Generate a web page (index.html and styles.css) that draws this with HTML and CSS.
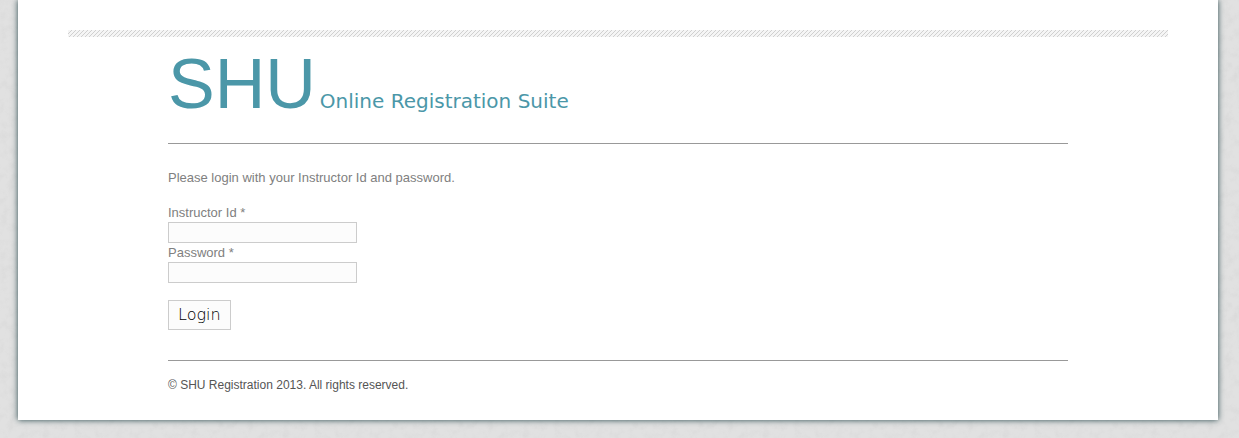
FILE: index.html
```
<!DOCTYPE html>
<html lang="en">
<head>
<meta charset="utf-8">
<title>SHU Online Registration Suite</title>
<link rel="stylesheet" href="styles.css">
</head>
<body>
<div class="page">
  <div class="stripe"></div>
  <div class="content">
    <header class="brand">
      <span class="brand-name">SHU</span>
      <span class="brand-tag">Online Registration Suite</span>
    </header>
    <main class="main">
      <p class="intro">Please login with your Instructor Id and password.</p>
      <form class="login">
        <label for="instructor">Instructor Id *</label>
        <input class="field" id="instructor" type="text">
        <label for="password">Password *</label>
        <input class="field" id="password" type="password">
        <button class="submit" type="submit">Login</button>
      </form>
    </main>
    <footer class="footer">© SHU Registration 2013. All rights reserved.</footer>
  </div>
</div>
</body>
</html>
```
FILE: styles.css
```
* { box-sizing: border-box; }
body {
  margin: 0;
  padding: 0 21px 18px 18px;
  background: #e1e1e1 url("data:image/svg+xml,%3Csvg xmlns='http://www.w3.org/2000/svg' width='240' height='240'%3E%3Cfilter id='n' x='0' y='0' width='1' height='1'%3E%3CfeTurbulence type='fractalNoise' baseFrequency='.12' numOctaves='4' stitchTiles='stitch'/%3E%3CfeColorMatrix values='0 0 0 0 .45 0 0 0 0 .45 0 0 0 0 .45 .3 0 0 0 -.13'/%3E%3C/filter%3E%3Crect width='240' height='240' filter='url(%23n)'/%3E%3C/svg%3E");
  font-family: "Liberation Sans", Arial, sans-serif;
  font-size: 13px;
  line-height: 16px;
  color: #808080;
}
.page {
  max-width: 1200px;
  margin: 0 auto;
  padding: 30px 50px 27px;
  background: #fff;
  box-shadow: 0 0 6px #28484c;
}
.stripe {
  height: 7px;
  background: #f5f5f5 url("data:image/svg+xml,%3Csvg xmlns='http://www.w3.org/2000/svg' width='4' height='4' shape-rendering='crispEdges'%3E%3Cpath fill='%23d0d0d0' d='M3 0h1v1H3zM2 1h1v1H2zM1 2h1v1H1zM0 3h1v1H0z'/%3E%3C/svg%3E");
}
.content {
  max-width: 900px;
  margin: 0 auto;
}
.brand {
  display: flex;
  align-items: baseline;
  gap: 4px;
  height: 107px;
  padding-top: 11px;
  border-bottom: 1px solid #999;
  color: #4b97a8;
}
.brand-name { font-size: 70px; line-height: 72px; }
.brand-tag { font-family: "DejaVu Sans", sans-serif; font-size: 20px; }
.main {
  padding: 26px 0 30px;
  border-bottom: 1px solid #999;
}
.intro { margin: 0 0 19px; }
.login {
  display: flex;
  flex-direction: column;
  align-items: flex-start;
}
.field {
  width: 189px;
  height: 21px;
  margin: 1px 0 2px;
  padding: 1px 3px;
  border: 1px solid #ccc;
  background: #fcfcfc;
  font: inherit;
}
.submit {
  height: 30px;
  margin-top: 15px;
  padding: 0 9px 2px;
  border: 1px solid #ccc;
  background: #fcfcfc;
  color: #000;
  font: 200 16px "DejaVu Sans", sans-serif;
}
.footer {
  padding-top: 16px;
  color: #555;
  font-size: 12px;
}
```
